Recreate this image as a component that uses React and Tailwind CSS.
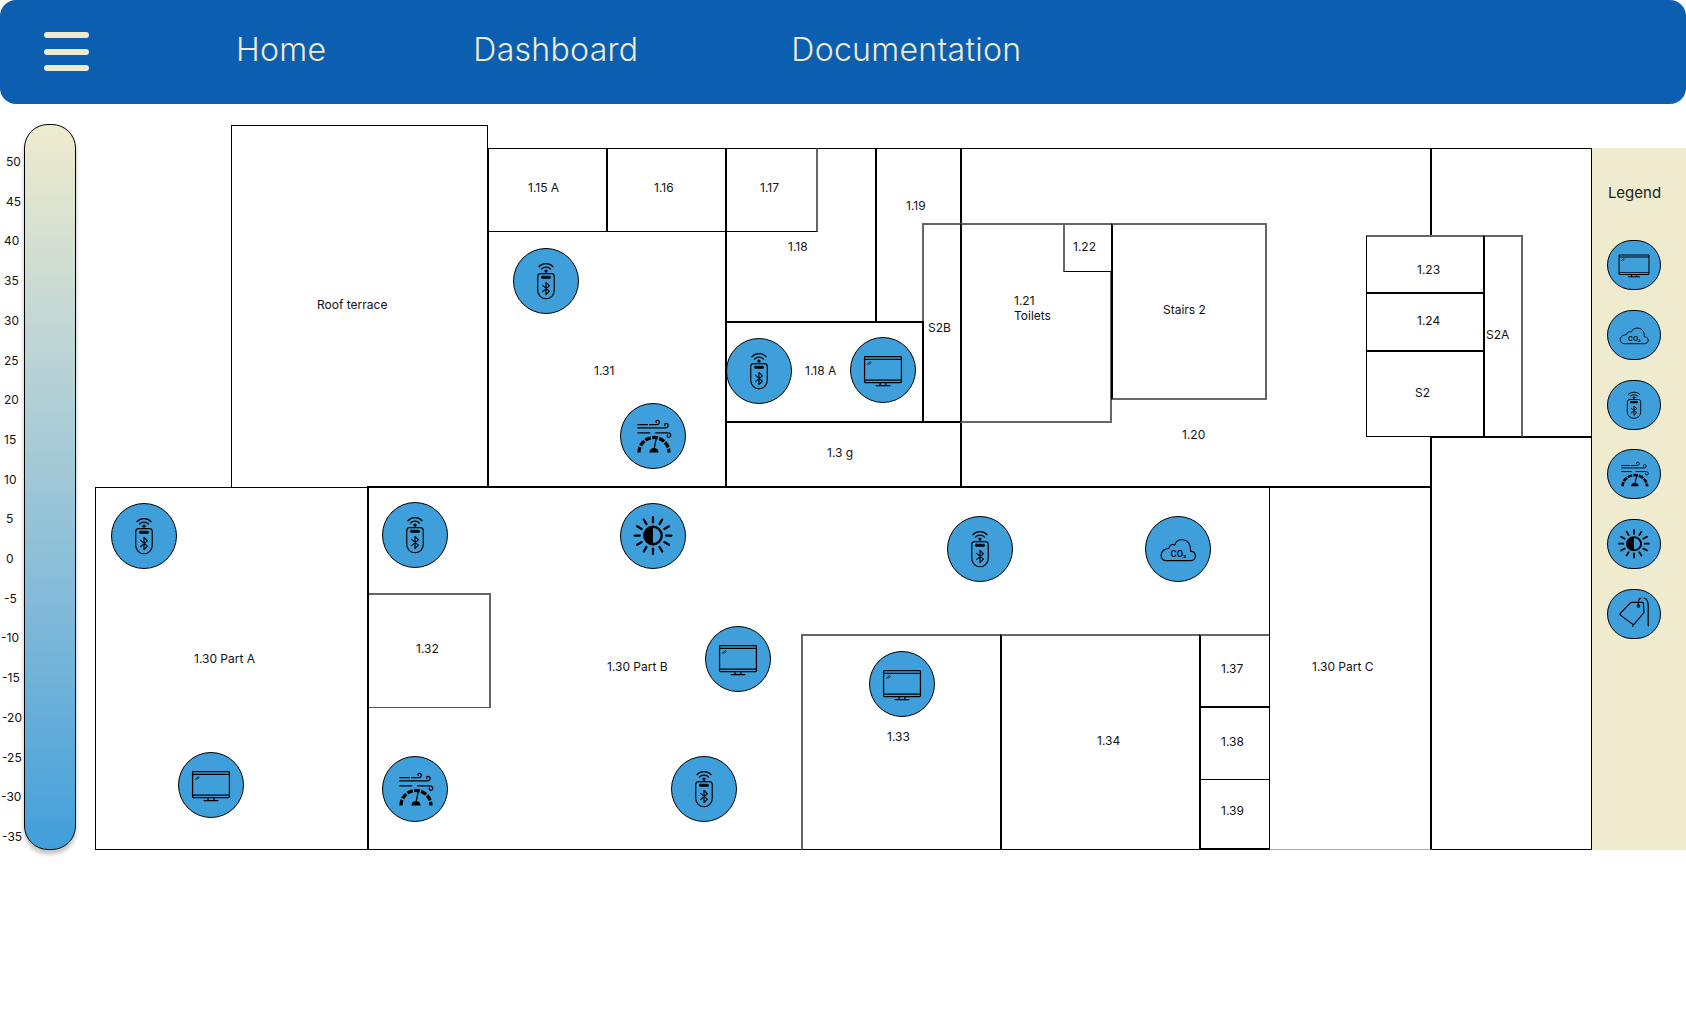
const scale = [
  ['50', 'pl-[6px]'], ['45', 'pl-[6px]'], ['40', 'pl-[4px]'], ['35', 'pl-[4px]'], ['30', 'pl-[4px]'], ['25', 'pl-[4px]'],
  ['20', 'pl-[4px]'], ['15', 'pl-[4px]'], ['10', 'pl-[4px]'], ['5', 'pl-[6px]'], ['0', 'pl-[6px]'], ['-5', 'pl-[4px]'],
  ['-10', 'pl-[1px]'], ['-15', 'pl-[2px]'], ['-20', 'pl-[2px]'], ['-25', 'pl-[2px]'], ['-30', 'pl-[1px]'], ['-35', 'pl-[2px]'],
]

// rooms are drawn back to front, the big outlines first
const rooms = [
  'left-[136px] top-[1px] w-[257px] h-[363px] border',
  'left-[865px] top-[24px] w-[472px] h-[340px] border border-l-2 border-b-2',
  'left-[1335px] top-[24px] w-[162px] h-[290px] border border-l-2',
  'left-[630px] top-[24px] w-[152px] h-[175px] border',
  'left-[780px] top-[24px] w-[87px] h-[175px] border border-l-2 border-r-2',
  'left-[392px] top-[24px] w-[120px] h-[84px] border border-l-2',
  'left-[511px] top-[24px] w-[120px] h-[84px] border border-l-2',
  'left-[630px] top-[24px] w-[93px] h-[84px] border border-l-2 border-r-2 border-r-[#666]',
  'left-[392px] top-[107px] w-[240px] h-[257px] border border-l-2 border-r-2 border-b-2',
  'left-[827px] top-[99px] w-[40px] h-[200px] border border-t-2 border-t-[#666] border-l-2 border-l-[#666] border-r-2',
  'left-[630px] top-[197px] w-[199px] h-[102px] border-2',
  'left-[630px] top-[297px] w-[237px] h-[67px] border-2',
  'left-[865px] top-[99px] w-[152px] h-[200px] border border-l-2 border-t-2 border-t-[#666] border-b-2 border-b-[#666] border-r-2 border-r-[#666]',
  'left-[968px] top-[99px] w-[49px] h-[49px] border border-t-2 border-t-[#666] border-l-2 border-l-[#666]',
  'left-[1016px] top-[99px] w-[156px] h-[177px] border border-l-2 border-t-2 border-t-[#666] border-b-2 border-b-[#666] border-r-2 border-r-[#666]',
  'left-[1335px] top-[312px] w-[162px] h-[414px] border border-l-2 border-t-2',
  'left-[1271px] top-[111px] w-[119px] h-[59px] border border-t-2 border-t-[#666]',
  'left-[1271px] top-[168px] w-[119px] h-[60px] border border-y-2',
  'left-[1271px] top-[226px] w-[119px] h-[87px] border border-t-2',
  'left-[1388px] top-[111px] w-[40px] h-[202px] border border-l-2 border-t-2 border-t-[#666] border-r-2 border-r-[#666]',
  'left-[0px] top-[363px] w-[274px] h-[363px] border',
  'left-[272px] top-[362px] w-[904px] h-[364px] border border-l-2 border-t-2',
  'left-[274px] top-[469px] w-[122px] h-[115px] border border-l-0 border-t-2 border-t-[#666] border-r-2 border-r-[#666] border-b-[#555]',
  'left-[706px] top-[510px] w-[200px] h-[216px] border border-l-2 border-l-[#666] border-t-2 border-t-[#666]',
  'left-[905px] top-[510px] w-[201px] h-[216px] border border-l-2 border-t-2 border-t-[#666]',
  'left-[1104px] top-[510px] w-[72px] h-[74px] border border-l-2 border-t-2 border-t-[#666] border-b-2',
  'left-[1104px] top-[584px] w-[72px] h-[72px] border border-t-0 border-l-2',
  'left-[1104px] top-[655px] w-[72px] h-[71px] border border-l-2 border-b-2',
  'left-[1174px] top-[362px] w-[163px] h-[364px] border border-t-2 border-r-2 border-b-[#aaa]',
]

const labels = [
  ['Roof terrace', 'left-[222px] top-[173px]'],
  ['1.15 A', 'left-[433px] top-[56px]'],
  ['1.16', 'left-[559px] top-[56px]'],
  ['1.17', 'left-[665px] top-[56px]'],
  ['1.19', 'left-[811px] top-[74px]'],
  ['1.18', 'left-[693px] top-[115px]'],
  ['1.31', 'left-[499px] top-[239px]'],
  ['1.18 A', 'left-[710px] top-[239px]'],
  ['S2B', 'left-[833px] top-[196px]'],
  ['1.3 g', 'left-[732px] top-[321px]'],
  ['1.22', 'left-[978px] top-[115px]'],
  ['1.21\nToilets', 'left-[919px] top-[169px]'],
  ['Stairs 2', 'left-[1068px] top-[178px]'],
  ['1.20', 'left-[1087px] top-[303px]'],
  ['1.23', 'left-[1322px] top-[138px]'],
  ['1.24', 'left-[1322px] top-[189px]'],
  ['S2', 'left-[1320px] top-[261px]'],
  ['S2A', 'left-[1391px] top-[203px]'],
  ['1.30 Part A', 'left-[99px] top-[527px]'],
  ['1.32', 'left-[321px] top-[517px]'],
  ['1.30 Part B', 'left-[512px] top-[535px]'],
  ['1.33', 'left-[792px] top-[605px]'],
  ['1.34', 'left-[1002px] top-[609px]'],
  ['1.37', 'left-[1126px] top-[537px]'],
  ['1.38', 'left-[1126px] top-[610px]'],
  ['1.39', 'left-[1126px] top-[679px]'],
  ['1.30 Part C', 'left-[1217px] top-[535px]'],
]

function Remote() {
  return (
    <g fill="none" stroke="#000" strokeWidth="1.2" strokeLinecap="round" strokeLinejoin="round">
      <path d="M25.7 18.3a10 10 0 0 1 14.6 0" />
      <path d="M28.3 20.8a6.2 6.2 0 0 1 9.4 0" />
      <circle cx="33" cy="22.8" r="1.1" fill="#000" />
      <path d="M27.5 25.4h11a3 3 0 0 1 3 3v14.4a8.5 8.5 0 0 1-17 0V28.4a3 3 0 0 1 3-3z" />
      <rect x="28.2" y="28" width="9.6" height="2.4" rx="1" fill="#000" strokeWidth="0.6" />
      <path d="M29.5 37.5l7 6-3.5 3.6V34.4l3.5 3.6-7 6" />
    </g>
  )
}

function Monitor() {
  return (
    <g fill="none" stroke="#000" strokeWidth="1.3" strokeLinejoin="round">
      <rect x="14" y="19.2" width="38" height="26.8" rx="0.8" />
      <path d="M14 22h38M14 43.5h38" />
      <path d="M16.5 27.5l3.5-3.5M18.5 27.5l2.5-2.5" strokeWidth="0.9" />
      <path d="M30 46v2.5M36 46v2.5M25.5 49.2h15" />
    </g>
  )
}

function Cloud() {
  return (
    <g>
      <path
        d="M21 45H46C49.5 45 51.5 42 51 39.5C50.5 36.5 48 35 46 35.5C46.5 30 44 24 38 23.5C33.5 23 30.5 26 29.5 29C27 27.5 24 29 23.5 32.5C19 32.5 15.5 35.5 15.5 39.5C15.5 43 18 45 21 45Z"
        fill="none"
        stroke="#000"
        strokeWidth="1.2"
      />
      <text x="33.5" y="41.5" textAnchor="middle" fontSize="8.5" fontWeight="600" fontFamily="Inter, sans-serif" fill="#000">
        CO₂
      </text>
    </g>
  )
}

function Wind() {
  return (
    <g fill="none" stroke="#000" strokeWidth="1.2" strokeLinecap="round">
      <path d="M17.3 21.3h10M29.5 21.3h7.5c2.8 0 3.6-3.6 1.2-4.4-1.6-.5-2.8 1.2-1.7 2.4" />
      <path d="M17.3 24.7h28.5c3 0 3.8-3.8 1.3-4.6-1.7-.5-2.9 1.2-1.8 2.4" />
      <path d="M17.3 29.7h12.5M35.5 29.7h13c3 0 3.8 3.8 1.3 4.6-1.7.5-2.9-1.2-1.8-2.4" />
      <path d="M18.5 50a15.5 15.5 0 0 1 31 0" strokeWidth="3.4" strokeLinecap="butt" strokeDasharray="6 1.4" />
      <path d="M34 47l2.4-11.5" strokeWidth="1.3" />
      <path d="M29.3 50a4.7 4.7 0 0 1 9.4 0z" fill="#000" stroke="none" />
    </g>
  )
}

function Sun() {
  const rays = [0, 30, 60, 90, 120, 150, 180, 210, 240, 270, 300, 330]
  return (
    <g>
      {rays.map((a) => (
        <path key={a} d="M33 13.5v5.5" stroke="#000" strokeWidth="2.3" strokeLinecap="round" transform={`rotate(${a} 33 32.5)`} />
      ))}
      <circle cx="33" cy="32.5" r="9" fill="none" stroke="#000" strokeWidth="2.4" />
      <path d="M33 23.5a9 9 0 0 0 0 18z" fill="#000" />
    </g>
  )
}

function Tag() {
  return (
    <g fill="none" stroke="#000" strokeWidth="1.5" strokeLinecap="round" strokeLinejoin="round">
      <path d="M30 17h13.5a1.5 1.5 0 0 1 1.5 1.5l.5 12a2 2 0 0 1-.6 1.5L33.5 46.5a2 2 0 0 1-2.8.1L15.8 34.5a1.5 1.5 0 0 1-.2-2.2L28.8 17.5a2 2 0 0 1 1.2-.5z" />
      <circle cx="38.7" cy="22" r="1.6" />
      <path d="M38.7 20.5c-1.2-4.5.5-9 3-9" />
      <path d="M46 11c4 1 5 6 5 11v27" />
      <path d="M32 47l-.4 3" />
    </g>
  )
}

const icons = { remote: Remote, monitor: Monitor, cloud: Cloud, wind: Wind, sun: Sun, tag: Tag }

function Sensor({ type, className }) {
  const Icon = icons[type]
  return (
    <div className={`rounded-full bg-[#3f9fda] border border-black overflow-hidden ${className}`}>
      <svg className="w-full h-full block" viewBox="0 0 66 66" preserveAspectRatio="none">
        <Icon />
      </svg>
    </div>
  )
}

const placed = [
  ['remote', 'left-[418px] top-[124px]'],
  ['wind', 'left-[525px] top-[279px]'],
  ['remote', 'left-[631px] top-[214px]'],
  ['monitor', 'left-[755px] top-[213px]'],
  ['remote', 'left-[16px] top-[379px]'],
  ['monitor', 'left-[83px] top-[628px]'],
  ['remote', 'left-[287px] top-[378px]'],
  ['sun', 'left-[525px] top-[379px]'],
  ['wind', 'left-[287px] top-[632px]'],
  ['remote', 'left-[576px] top-[632px]'],
  ['remote', 'left-[852px] top-[392px]'],
  ['cloud', 'left-[1050px] top-[392px]'],
  ['monitor', 'left-[610px] top-[502px]'],
  ['monitor', 'left-[774px] top-[527px]'],
]

export default function App() {
  return (
    <div className="min-h-[1024px] bg-white text-[#111] font-['Inter',sans-serif]">
      <header className="h-[104px] rounded-2xl bg-[#0c5fb0] flex items-center text-[#efebce] text-[32px] font-light leading-none tracking-[0.3px]">
        <div className="ml-[44px] w-[45px] flex flex-col gap-[10.5px] pb-[1px]">
          <span className="h-[6px] rounded-full bg-[#efebce]"></span>
          <span className="h-[6px] rounded-full bg-[#efebce]"></span>
          <span className="h-[6px] rounded-full bg-[#efebce]"></span>
        </div>
        <nav className="ml-[147px] mb-[4px] flex gap-[148px]">
          <span>Home</span>
          <span className="-ml-[1px]">Dashboard</span>
          <span className="pl-[5px]">Documentation</span>
        </nav>
      </header>

      <main className="flex pt-[20px]">
        <div className="w-[95px] flex shrink-0">
          <div className="w-[24px] h-[726px] pt-[30px] pb-[6px] flex flex-col justify-between text-[12px] leading-[15px] shrink-0">
            {scale.map(([value, pad]) => (
              <span key={value} className={pad}>{value}</span>
            ))}
          </div>
          <div className="w-[52px] h-[726px] rounded-[24px] border border-black bg-linear-to-b from-[#efebce] to-[#3f9fda] shadow-[0_4px_4px_rgba(0,0,0,0.25)]"></div>
        </div>

        <div className="relative w-[1497px] h-[726px] shrink-0 text-[12px] leading-[15px]">
          {rooms.map((room) => (
            <div key={room} className={`absolute bg-white border-black ${room}`}></div>
          ))}
          {labels.map(([text, pos]) => (
            <span key={text} className={`absolute whitespace-pre-line ${pos}`}>{text}</span>
          ))}
          {placed.map(([type, pos]) => (
            <Sensor key={pos} type={type} className={`absolute w-[66px] h-[66px] ${pos}`} />
          ))}
        </div>

        <aside className="w-[94px] h-[702px] mt-[24px] bg-[#efebce] flex flex-col items-center pt-[36px] pr-[10px]">
          <h2 className="text-[15px] leading-[18px] text-[#222] pl-[1px]">Legend</h2>
          <div className="mt-[38px] flex flex-col gap-[19.8px]">
            <Sensor type="monitor" className="w-[54px] h-[50px]" />
            <Sensor type="cloud" className="w-[54px] h-[50px]" />
            <Sensor type="remote" className="w-[54px] h-[50px]" />
            <Sensor type="wind" className="w-[54px] h-[50px]" />
            <Sensor type="sun" className="w-[54px] h-[50px]" />
            <Sensor type="tag" className="w-[54px] h-[50px]" />
          </div>
        </aside>
      </main>
    </div>
  )
}
